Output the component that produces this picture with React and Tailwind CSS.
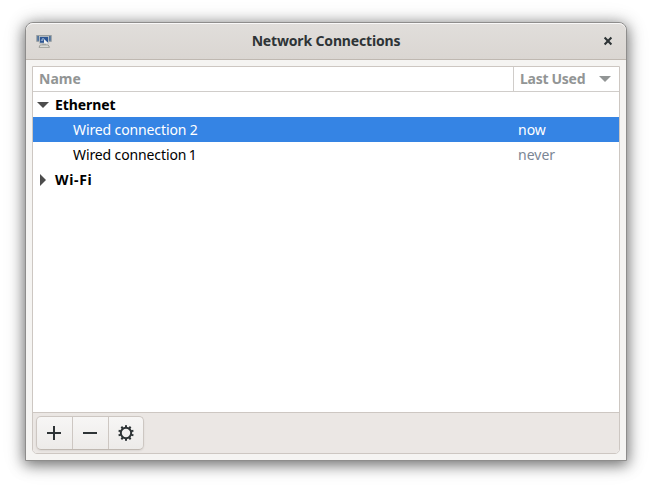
import React from "react";

function ComputerIcon() {
  return (
    <svg width="16" height="16" viewBox="0 0 16 16">
      <rect x="0.8" y="2.5" width="14.4" height="5.8" fill="#4a709f" stroke="#989d9e" />
      <rect x="3.4" y="3.4" width="9.2" height="6.8" fill="#2c5593" stroke="#c3c6c5" strokeWidth="0.9" />
      <path d="M4.500 8l1.800-3h2L7 8z" fill="#7f9dc6" />
      <path d="M8 6l4.500 4.200-1.800.2-2.700 2.300z" fill="#f2f2f0" />
      <path d="M6.200 10.500h4v1.500h-4z" fill="#b4b7b3" />
      <path d="M4.200 12h8l1.300 2.300H3z" fill="#e9e9e6" stroke="#92948f" strokeWidth="0.9" />
    </svg>
  );
}

function DownTriangle({ className }) {
  return (
    <svg width="12" height="6" viewBox="0 0 12 6" className={className}>
      <path d="M0 0h12L6 6z" fill="currentColor" />
    </svg>
  );
}

function ToolButton({ children, label, last }) {
  return (
    <button
      aria-label={label}
      className={
        last
          ? "flex h-8 w-[34px] items-center justify-center text-[#2e3436]"
          : "flex h-8 w-9 items-center justify-center border-r border-[#cdc7c2] pr-px text-[#2e3436]"
      }
    >
      {children}
    </button>
  );
}

function Gear() {
  const teeth = [0, 36, 72, 108, 144, 180, 216, 252, 288, 324];
  return (
    <svg width="16" height="16" viewBox="0 0 16 16">
      <circle cx="8" cy="8" r="5.2" fill="none" stroke="currentColor" strokeWidth="2" />
      {teeth.map((a) => (
        <rect key={a} x="7" y="0.2" width="2" height="2.6" fill="currentColor" transform={`rotate(${a} 8 8)`} />
      ))}
    </svg>
  );
}

export default function App() {
  return (
    <div className="h-[489px] w-[652px] overflow-hidden bg-white pl-[25px] pt-[22px] font-['Noto_Sans',sans-serif] text-[14px] leading-[25px]">
      <div className="flex h-[439px] w-[602px] flex-col overflow-hidden rounded-t-[8px] border border-[#8e8d8c] bg-[#f5f4f2] shadow-[0_3px_14px_1px_rgba(0,0,0,0.5),0_2px_24px_rgba(0,0,0,0.14)]">
        <header className="flex h-[37px] shrink-0 items-center rounded-t-[7px] border-b border-[#bfb8b1] bg-linear-to-b from-[#e1dedb] to-[#dad6d2] px-[10px] shadow-[inset_0_1px_#f9f8f8]">
          <ComputerIcon />
          <h1 className="flex-1 pb-[2px] text-center font-bold text-[#2e3436]">
            <span className="inline-block tracking-[-0.16px]">Network Connections</span>
          </h1>
          <svg width="16" height="16" viewBox="0 0 16 16">
            <path d="M4.6 4.6l6.8 6.8M11.4 4.6l-6.8 6.8" stroke="#2e3436" strokeWidth="2.1" />
          </svg>
        </header>
        <main className="mx-[6px] mt-[6px] flex h-[388px] flex-col overflow-hidden rounded-b-[5px] border border-[#cdc7c2] bg-white">
          <div className="flex h-[25px] shrink-0 border-b border-[#d0cdca] font-bold text-[#929595]">
            <div className="w-[481px] border-r border-[#d0cdca] pl-[6px] leading-[23px]">Name</div>
            <div className="flex flex-1 items-center justify-between pl-[6px] pr-2">
              <span className="self-start leading-[23px] tracking-[-0.28px]">Last Used</span>
              <DownTriangle />
            </div>
          </div>
          <div className="flex-1 text-black">
            <div className="flex h-[25px] items-center pl-1 font-bold">
              <DownTriangle className="mr-[6px] text-[#4d4d4d]" />
              <span className="tracking-[-0.08px]">Ethernet</span>
            </div>
            <div className="flex h-[25px] bg-[#3584e4] pl-10 text-white">
              <span className="w-[445px] tracking-[-0.12px]">Wired connection 2</span>
              <span>now</span>
            </div>
            <div className="flex h-[25px] pl-10">
              <span className="w-[445px] tracking-[-0.12px]">
                Wired connection<span className="-ml-px"> 1</span>
              </span>
              <span className="text-[#7b8695]">never</span>
            </div>
            <div className="flex h-[25px] items-center pl-[7px] font-bold">
              <svg width="6" height="12" viewBox="0 0 6 12" className="mr-[9px]">
                <path d="M0 0v12l6-6z" fill="#4d4d4d" />
              </svg>
              <span className="tracking-[0.65px]">Wi-Fi</span>
            </div>
          </div>
          <footer className="flex h-[41px] shrink-0 items-start border-t border-[#cdc7c2] bg-[#ebe7e4] pl-[3px] pt-[3px]">
            <div className="flex h-[34px] w-[108px] rounded-[5px] border border-[#cdc7c2] border-b-[#bfb8b1] bg-linear-to-b from-[#f7f6f5] to-[#edebe9] shadow-[0_1px_2px_rgba(0,0,0,0.08)]">
              <ToolButton label="Add">
                <svg width="16" height="16" viewBox="0 0 16 16">
                  <path d="M7 1h2v6h6v2H9v6H7V9H1V7h6z" fill="currentColor" />
                </svg>
              </ToolButton>
              <ToolButton label="Remove">
                <svg width="16" height="16" viewBox="0 0 16 16">
                  <path d="M1 7h14v2H1z" fill="currentColor" />
                </svg>
              </ToolButton>
              <ToolButton label="Settings" last>
                <Gear />
              </ToolButton>
            </div>
          </footer>
        </main>
      </div>
    </div>
  );
}
